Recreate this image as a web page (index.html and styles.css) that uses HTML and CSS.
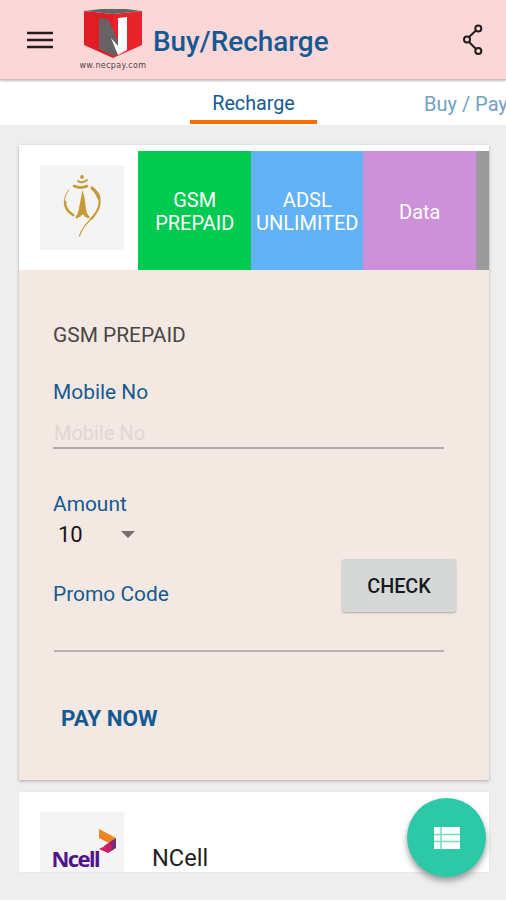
FILE: index.html
```html
<!DOCTYPE html>
<html lang="en">
<head>
<meta charset="utf-8">
<title>Buy/Recharge</title>
<link rel="stylesheet" href="styles.css">
</head>
<body>
<header class="appbar">
  <svg class="menu" viewBox="0 0 26 18"><path d="M0 2h26M0 9h26M0 16h26"/></svg>
  <div class="brand">
    <svg class="cube" viewBox="0 0 58 50">
      <path fill="#e01d25" d="M0 2 29 5V49L0 36Z"/>
      <path fill="#e9232a" d="M29 5 58 2V36L29 49Z"/>
      <path fill="#666365" d="M0 2 17 0H42L58 2 29 5Z"/>
      <path fill="#666365" d="M15 9 24 10 34 32V45L29 47 15 40Z"/>
      <path fill="#fff" d="M34 9 43 8V41L34 46 27 29 34 37Z"/>
    </svg>
    <span class="site">ww.necpay.com</span>
  </div>
  <h1 class="title">Buy/Recharge</h1>
  <svg class="share" viewBox="0 0 20 32"><path d="M6 13 13 6.500M6 18 13 25"/><circle cx="15.300" cy="4.500" r="3"/><circle cx="4" cy="15.500" r="3"/><circle cx="15.300" cy="27" r="3"/></svg>
</header>
<nav class="tabs">
  <a class="tab active">Recharge</a>
  <a class="tab next">Buy / Pay</a>
</nav>
<main class="content">
  <section class="card recharge">
    <div class="providers">
      <div class="logo">
        <svg viewBox="0 0 84 84" fill="none" stroke="#c69b37" stroke-linecap="round">
          <circle cx="42" cy="12" r="1.900" fill="#c69b37" stroke="none"/>
          <path stroke-width="2" d="M38 16Q42 19 47 15"/>
          <path stroke-width="2.600" d="M34 21Q41 24 47 21"/>
          <path stroke-width="1" d="M29 25C22 32 23 44 34 50"/>
          <path stroke-width="2.600" d="M25 37C25 43 28 47 33 50"/>
          <path stroke-width="3.200" d="M52 23Q57 27 59 33"/>
          <path stroke-width="2.200" d="M58 29C62 39 58 47 51 54"/>
          <path stroke-width="1.200" d="M54 51C46 59 42 63 39.500 71"/>
          <path fill="#c69b37" stroke="none" d="M42.500 25 44.500 33 46 44 48 52H45Q43 47 40 52H37L39 43Z"/>
          <path stroke-width="2.800" d="M37 52 40 48M48 52 45 48"/>
        </svg>
      </div>
      <div class="services">
        <div class="service gsm">GSM<br>PREPAID</div>
        <div class="service adsl">ADSL<br>UNLIMITED</div>
        <div class="service data">Data</div>
        <div class="service more"></div>
      </div>
    </div>
    <div class="form">
      <div class="heading">GSM PREPAID</div>
      <div class="label mobile">Mobile No</div>
      <div class="input">Mobile No</div>
      <div class="label amount">Amount</div>
      <div class="select"><span>10</span><i class="caret"></i></div>
      <div class="promo"><span class="label">Promo Code</span><button class="check">CHECK</button></div>
      <div class="promo-line"></div>
      <div class="pay">PAY NOW</div>
    </div>
  </section>
  <section class="card ncell">
    <div class="logo ncell-logo">
      <svg viewBox="0 0 84 60">
        <path fill="#ef8420" d="M59 17 76 26 71 32 59 26Z"/>
        <path fill="#78287d" d="M76 26V36L68 41 64 34Z"/>
        <path fill="#d41c62" d="M59 37 71 31 72 36 68 41Z"/>
        <text x="11.500" y="55" textLength="49" class="ncell-word">Ncell</text>
      </svg>
    </div>
    <span class="name">NCell</span>
  </section>
</main>
<div class="fab">
  <svg viewBox="0 0 26 22"><path fill="#fff" d="M0 0h26v22H0z"/><path stroke="#75dcbf" stroke-width="1.500" d="M0 7.500h26M0 14.500h26M7 0v22"/></svg>
</div>
</body>
</html>
```
FILE: styles.css
```css
* { box-sizing: border-box; }
body {
  margin: 0;
  width: 506px;
  height: 900px;
  overflow: hidden;
  background: #eee;
  font-family: Roboto, "Liberation Sans", sans-serif;
  font-size: 20px;
  line-height: 24px;
  color: #145a92;
}
svg { display: block; }
.appbar {
  position: relative;
  z-index: 1;
  display: flex;
  align-items: flex-start;
  height: 80px;
  background: #fbd7d8;
  border-bottom: 1px solid #d3bfbe;
  box-shadow: 0 1px 2px #bbb;
}
.menu { width: 26px; height: 18px; margin: 31px 0 0 27px; }
.menu path { stroke: #241d1e; stroke-width: 2.3; }
.brand { width: 68px; margin: 9px 0 0 26px; display: flex; flex-direction: column; align-items: center; }
.cube { width: 58px; height: 50px; }
.site { font: 8px/10px "DejaVu Sans", sans-serif; letter-spacing: 0.35px; color: #514447; margin-top: 2px; white-space: nowrap; }
.title { margin: 26px 0 0 6px; font-size: 27.9px; line-height: 32px; font-weight: 500; white-space: nowrap; }
.share { width: 20px; height: 32px; margin: 24px 23px 0 auto; }
.share path, .share circle { fill: none; stroke: #221c1d; stroke-width: 2; }
.tabs { display: flex; height: 45px; background: #fff; padding-left: 190px; white-space: nowrap; }
.tab { text-align: center; padding-top: 12px; flex: none; }
.active { width: 127px; border-bottom: 4px solid #f97000; height: 44px; font-size: 19.7px; }
.next { margin-left: 107px; color: #73a0c4; }
.content { display: flex; flex-direction: column; gap: 12px; padding: 20px 17px 0 19px; }
.card { background: #fff; box-shadow: 0 1px 3px #aaa; }
.recharge { height: 635px; }
.providers { display: flex; height: 125px; }
.logo { width: 84px; height: 85px; background: #f4f4f4; margin: 20px 14px 0 21px; flex: none; }
.services { display: flex; flex: 1; margin-top: 6px; overflow: hidden; }
.service { width: 112.5px; flex: none; display: flex; align-items: center; justify-content: center; text-align: center; color: #fff; line-height: 23px; padding: 2px 0 0 1px; }
.gsm { background: #00ca50; }
.adsl { background: #62b2f7; }
.data { background: #cd91d9; padding-top: 3px; }
.more { background: #9b9b9b; }
.form { height: 510px; background: #f4e8e3; padding: 53px 33px 0 34px; }
.heading { color: #494544; font-size: 20.9px; }
.label { font-size: 20.9px; }
.mobile { margin-top: 33px; }
.input { height: 28px; margin: 17px 12px 0 0; padding: 0 0 0 1px; color: #e1d7d4; border-bottom: 2px solid #b4a8a5; }
.amount { margin-top: 43px; }
.select { display: flex; align-items: center; height: 24px; margin-top: 7px; padding-left: 5px; color: #171717; font-size: 22px; }
.caret { margin: -2px 0 0 38px; border: 7px solid transparent; border-top-color: #746d6a; border-bottom: 0; }
.promo { display: flex; justify-content: space-between; height: 53px; margin-top: 12px; }
.promo .label { margin-top: 23px; }
.check { width: 114px; height: 53px; border: 0; border-radius: 3px; background: #d5d8d6; box-shadow: 0 1px 2px #aaa; font: 500 19.8px/24px Roboto, sans-serif; color: #171b1c; padding: 2px 0 0; }
.promo-line { height: 2px; margin: 38px 12px 0 1px; background: #bdb0ae; }
.pay { margin: 54px 0 0 8px; font-size: 22.4px; font-weight: 700; }
.ncell { display: flex; height: 80px; overflow: hidden; box-shadow: 0 0 2px #ddd; }
.ncell-logo svg { height: 60px; width: 84px; }
.ncell-word { font: 700 22px "Noto Sans", sans-serif; fill: #51138a; }
.name { margin: 54px 0 0 14px; font-size: 23.6px; color: #222; }
.fab { position: absolute; left: 407px; top: 798px; width: 79px; height: 79px; border-radius: 50%; background: #2bc9a8; box-shadow: 0 4px 6px #999; display: grid; place-items: center; }
.fab svg { width: 26px; height: 22px; }
```
